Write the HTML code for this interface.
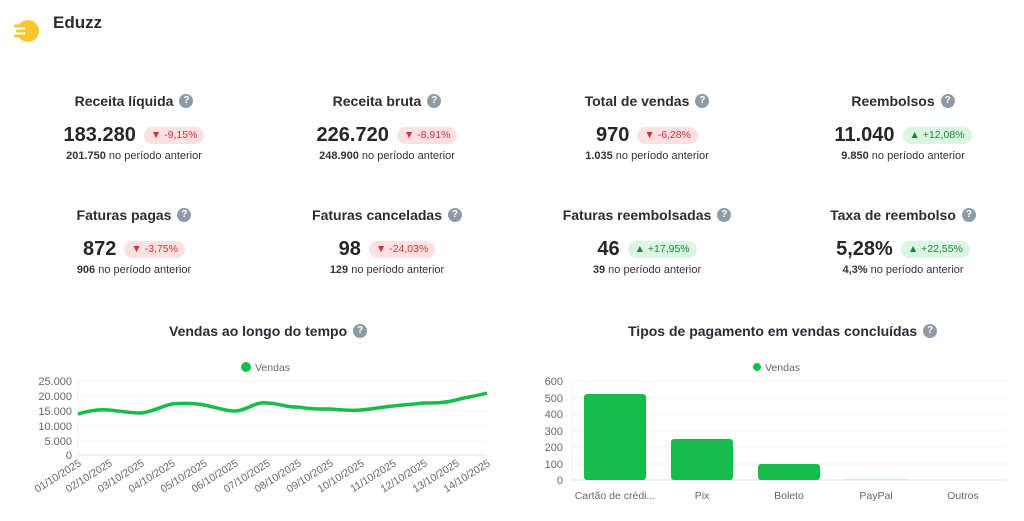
<!DOCTYPE html>
<html><head><meta charset="utf-8"><style>
*{margin:0;padding:0;box-sizing:border-box}
body{width:1024px;height:521px;background:#fff;font-family:"Liberation Sans",sans-serif;color:#222;position:relative;overflow:hidden}
.abs{position:absolute}
.stat{position:absolute;width:260px;text-align:center}
.t{font-size:14px;font-weight:bold;color:#2a2d33;display:flex;justify-content:center;align-items:center;gap:6px;height:18px}
.q{width:14px;height:14px;border-radius:50%;background:#8e9ba5;color:#fff;font-size:10px;line-height:14px;text-align:center;font-weight:bold;display:inline-block}
.v{display:flex;justify-content:center;align-items:center;gap:8px;margin-top:13px;height:24px}
.n{font-size:20px;font-weight:bold;color:#23262b}
.b{font-size:10.5px;padding:2px 7px;border-radius:9px;height:17px;line-height:13px}
.dn{background:#fbe1e1;color:#d6323a}
.up{background:#dcf4e2;color:#168a3a}
.s{font-size:11px;color:#333;margin-top:3px}
.s b{font-weight:bold}
.ct{font-size:14px;font-weight:bold;color:#2a2d33;display:flex;align-items:center;gap:6px;position:absolute}
</style></head><body>
<svg class="abs" style="left:12px;top:18px" width="30" height="26" viewBox="0 0 30 26">
<circle cx="16" cy="13" r="11" fill="#f7c72e"/>
<rect x="2" y="6.5" width="14" height="3" rx="1.5" fill="#f7c72e"/>
<rect x="4" y="11.5" width="12" height="3" rx="1.5" fill="#f7c72e"/>
<rect x="2" y="16.5" width="14" height="3" rx="1.5" fill="#f7c72e"/>
<rect x="0" y="9.5" width="13" height="2" fill="#fff"/>
<rect x="0" y="14.5" width="13" height="2" fill="#fff"/>
<rect x="0" y="0" width="6" height="26" fill="#fff" opacity="0"/>
</svg>
<div class="abs" style="left:53px;top:13px;font-size:17px;font-weight:bold;color:#2a2d33">Eduzz</div>

<div class="stat" style="left:4px;top:92px"><div class="t">Receita líquida <span class="q">?</span></div><div class="v"><span class="n">183.280</span><span class="b dn">▼ -9,15%</span></div><div class="s"><b>201.750</b> no período anterior</div></div>
<div class="stat" style="left:257px;top:92px"><div class="t">Receita bruta <span class="q">?</span></div><div class="v"><span class="n">226.720</span><span class="b dn">▼ -8,91%</span></div><div class="s"><b>248.900</b> no período anterior</div></div>
<div class="stat" style="left:517px;top:92px"><div class="t">Total de vendas <span class="q">?</span></div><div class="v"><span class="n">970</span><span class="b dn">▼ -6,28%</span></div><div class="s"><b>1.035</b> no período anterior</div></div>
<div class="stat" style="left:773px;top:92px"><div class="t">Reembolsos <span class="q">?</span></div><div class="v"><span class="n">11.040</span><span class="b up">▲ +12,08%</span></div><div class="s"><b>9.850</b> no período anterior</div></div>

<div class="stat" style="left:4px;top:206px"><div class="t">Faturas pagas <span class="q">?</span></div><div class="v"><span class="n">872</span><span class="b dn">▼ -3,75%</span></div><div class="s"><b>906</b> no período anterior</div></div>
<div class="stat" style="left:257px;top:206px"><div class="t">Faturas canceladas <span class="q">?</span></div><div class="v"><span class="n">98</span><span class="b dn">▼ -24,03%</span></div><div class="s"><b>129</b> no período anterior</div></div>
<div class="stat" style="left:517px;top:206px"><div class="t">Faturas reembolsadas <span class="q">?</span></div><div class="v"><span class="n">46</span><span class="b up">▲ +17,95%</span></div><div class="s"><b>39</b> no período anterior</div></div>
<div class="stat" style="left:773px;top:206px"><div class="t">Taxa de reembolso <span class="q">?</span></div><div class="v"><span class="n">5,28%</span><span class="b up">▲ +22,55%</span></div><div class="s"><b>4,3%</b> no período anterior</div></div>

<div class="ct" style="left:169px;top:323px">Vendas ao longo do tempo <span class="q">?</span></div>
<div class="ct" style="left:628px;top:323px">Tipos de pagamento em vendas concluídas <span class="q">?</span></div>

<svg class="abs" style="left:0;top:355px" width="1024" height="166" font-family="Liberation Sans, sans-serif" font-size="11" fill="#666">
<circle cx="246" cy="12" r="5" fill="#16bd4b"/><text x="255" y="16" font-size="10.5">Vendas</text>
<g stroke="#eef1f3" stroke-width="1">
<line x1="78" y1="26" x2="487" y2="26"/><line x1="78" y1="41" x2="487" y2="41"/><line x1="78" y1="56" x2="487" y2="56"/><line x1="78" y1="71" x2="487" y2="71"/><line x1="78" y1="86" x2="487" y2="86"/>
<line x1="78" y1="26" x2="78" y2="100"/>
</g>
<line x1="78" y1="100" x2="487" y2="100" stroke="#dde2e6"/>
<g text-anchor="end"><text x="72" y="30">25.000</text><text x="72" y="45">20.000</text><text x="72" y="60">15.000</text><text x="72" y="75">10.000</text><text x="72" y="90">5.000</text><text x="72" y="104">0</text></g>
<path d="M78,59 C88,56 98,54 109,55 C120,56 130,58 141,58 C152,57 162,51 172,49 C183,48 193,48 204,50 C215,52 225,56 235,56 C246,56 256,46 267,48 C278,48 288,53 298,52 C309,54 319,54 330,54 C341,55 351,56 361,55 C372,54 382,52 393,51 C404,50 414,49 424,48 C435,48 445,48 456,45 C467,42 477,41 487,38" fill="none" stroke="#16bd4b" stroke-width="3.5"/>
<g font-size="10.5" text-anchor="end">
<text transform="translate(82,110) rotate(-32)">01/10/2025</text>
<text transform="translate(113,110) rotate(-32)">02/10/2025</text>
<text transform="translate(145,110) rotate(-32)">03/10/2025</text>
<text transform="translate(176,110) rotate(-32)">04/10/2025</text>
<text transform="translate(208,110) rotate(-32)">05/10/2025</text>
<text transform="translate(239,110) rotate(-32)">06/10/2025</text>
<text transform="translate(271,110) rotate(-32)">07/10/2025</text>
<text transform="translate(302,110) rotate(-32)">08/10/2025</text>
<text transform="translate(334,110) rotate(-32)">09/10/2025</text>
<text transform="translate(365,110) rotate(-32)">10/10/2025</text>
<text transform="translate(397,110) rotate(-32)">11/10/2025</text>
<text transform="translate(428,110) rotate(-32)">12/10/2025</text>
<text transform="translate(460,110) rotate(-32)">13/10/2025</text>
<text transform="translate(491,110) rotate(-32)">14/10/2025</text>
</g>

<circle cx="757" cy="12" r="4" fill="#16bd4b"/><text x="765" y="16" font-size="10.5">Vendas</text>
<g stroke="#eef1f3">
<line x1="572" y1="26" x2="1007" y2="26"/><line x1="572" y1="43" x2="1007" y2="43"/><line x1="572" y1="59" x2="1007" y2="59"/><line x1="572" y1="76" x2="1007" y2="76"/><line x1="572" y1="92" x2="1007" y2="92"/><line x1="572" y1="109" x2="1007" y2="109"/>
<line x1="572" y1="26" x2="572" y2="125"/>
</g>
<line x1="572" y1="125" x2="1007" y2="125" stroke="#dde2e6"/>
<g text-anchor="end"><text x="563" y="30">600</text><text x="563" y="47">500</text><text x="563" y="63">400</text><text x="563" y="80">300</text><text x="563" y="96">200</text><text x="563" y="113">100</text><text x="563" y="129">0</text></g>
<g fill="#16bd4b">
<rect x="584" y="39" width="62" height="86" rx="3"/>
<rect x="671" y="84" width="62" height="41" rx="3"/>
<rect x="758" y="109" width="62" height="16" rx="3"/>
<rect x="845" y="124" width="62" height="1" fill="#cde9d6"/>
</g>
<g text-anchor="middle" font-size="10.5"><text x="615" y="144">Cartão de crédi...</text><text x="702" y="144">Pix</text><text x="789" y="144">Boleto</text><text x="876" y="144">PayPal</text><text x="963" y="144">Outros</text></g>
</svg>
</body></html>
